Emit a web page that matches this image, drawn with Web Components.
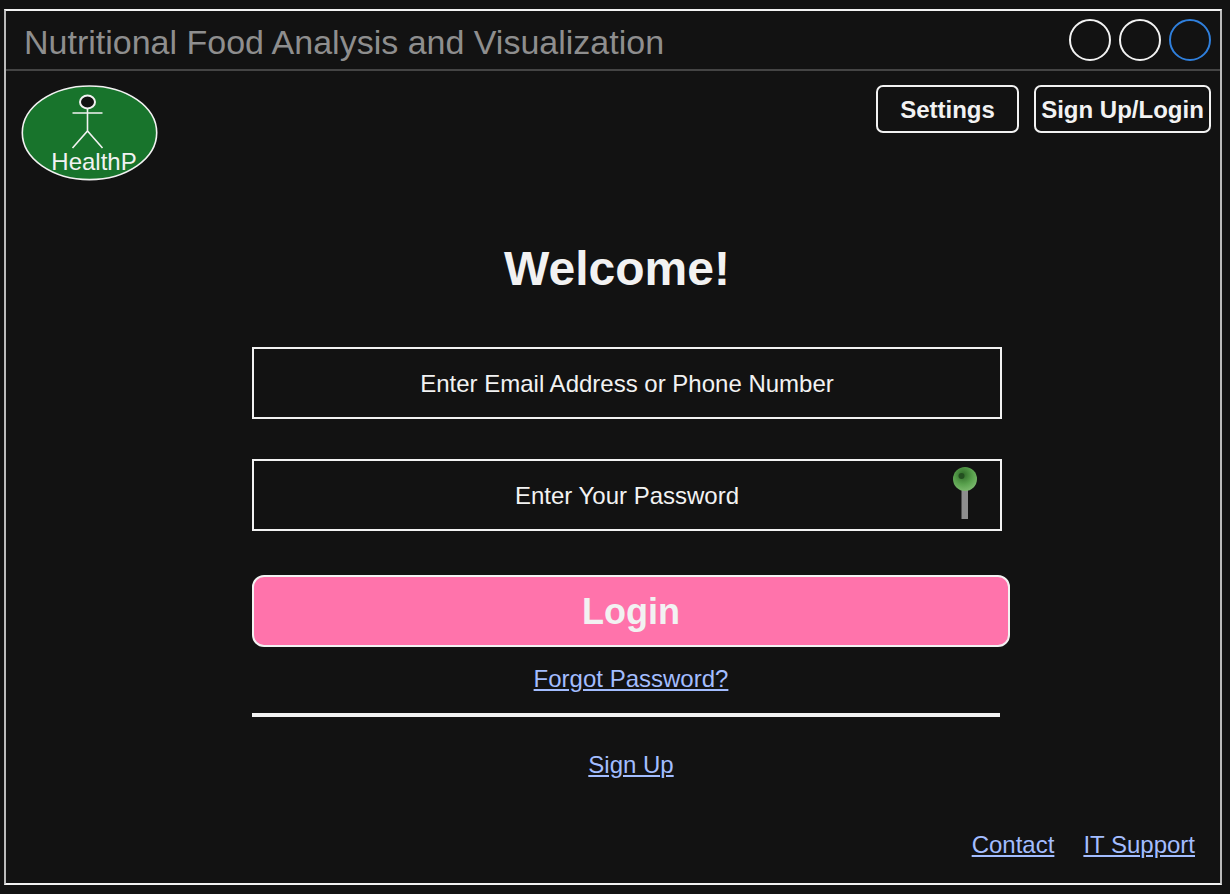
<!DOCTYPE html>
<html>
<head>
<meta charset="utf-8">
<title>Nutritional Food Analysis and Visualization</title>
<style>
    html, body {
        margin: 0;
        background: #121212;
        font-family: "Liberation Sans", Arial, sans-serif;
        color: #f2f2f2;
    }

    body {
        padding: 9px 0 0 4px;
    }
</style>
</head>
<body>
<app-window heading="Nutritional Food Analysis and Visualization">
    <top-bar>
        <health-logo></health-logo>
        <nav-button style="width: 143px">Settings</nav-button>
        <nav-button style="width: 177px">Sign Up/Login</nav-button>
    </top-bar>
    <login-form></login-form>
    <foot-links></foot-links>
</app-window>

<script>
class AppWindow extends HTMLElement {
    constructor() {
        super();
        this.attachShadow({ mode: "open" });
        this.shadowRoot.innerHTML = `
            <style>
            :host {
                display: flex;
                flex-direction: column;
                box-sizing: border-box;
                width: 1218px;
                height: 876px;
                border: 2px solid #f2f2f2;
                border-left-color: #bbb;
                border-right-color: #bbb;
            }

            .title {
                display: flex;
                align-items: center;
                justify-content: space-between;
                box-sizing: border-box;
                height: 60px;
                padding: 0 9px 0 18px;
                border-bottom: 2px solid #444;
            }

            h1 {
                margin: 0;
                padding-top: 4px;
                font-size: 34px;
                font-weight: 400;
                color: #8e8e8e;
            }

            .controls {
                display: flex;
                gap: 8px;
            }

            .controls span {
                box-sizing: border-box;
                width: 42px;
                height: 42px;
                border: 2px solid #f2f2f2;
                border-radius: 50%;
            }

            .controls span:last-child {
                border-color: #2f7fdc;
            }
            </style>
            <div class="title">
                <h1>${this.getAttribute("heading")}</h1>
                <div class="controls"><span></span><span></span><span></span></div>
            </div>
            <slot></slot>
        `;
    }
}

class TopBar extends HTMLElement {
    constructor() {
        super();
        this.attachShadow({ mode: "open" });
        this.shadowRoot.innerHTML = `
            <style>
            :host {
                display: flex;
                align-items: flex-start;
                gap: 15px;
                padding: 14px 9px 0 15px;
            }

            ::slotted(health-logo) {
                margin-right: auto;
            }
            </style>
            <slot></slot>
        `;
    }
}

class HealthLogo extends HTMLElement {
    constructor() {
        super();
        this.attachShadow({ mode: "open" });
        this.shadowRoot.innerHTML = `
            <style>
            :host {
                display: block;
                position: relative;
                width: 137px;
                height: 97px;
            }

            svg {
                display: block;
            }

            span {
                position: absolute;
                left: 9px;
                right: 0;
                top: 63px;
                text-align: center;
                font-size: 24px;
                line-height: 28px;
                color: #f2f2f2;
            }
            </style>
            <svg width="137" height="97" viewBox="0 0 137 97">
                <ellipse cx="68.5" cy="47.8" rx="67.2" ry="46.8" fill="#18742c" stroke="#f2f2f2" stroke-width="1.6"/>
                <ellipse cx="66.5" cy="17" rx="7.5" ry="6.5" fill="#121212" stroke="#f2f2f2" stroke-width="2"/>
                <path d="M66.5 24V46M51.5 28H81.5M51.5 63L66.5 46L81.5 63" fill="none" stroke="#f2f2f2" stroke-width="1.6"/>
            </svg>
            <span>HealthP</span>
        `;
    }
}

class NavButton extends HTMLElement {
    constructor() {
        super();
        this.attachShadow({ mode: "open" });
        this.shadowRoot.innerHTML = `
            <style>
            :host {
                display: flex;
                align-items: center;
                justify-content: center;
                box-sizing: border-box;
                height: 48px;
                padding-top: 2px;
                border: 2px solid #f2f2f2;
                border-radius: 7px;
                font-size: 24px;
                font-weight: 700;
                color: #f2f2f2;
                white-space: nowrap;
            }
            </style>
            <slot></slot>
        `;
    }
}

class TextField extends HTMLElement {
    constructor() {
        super();
        this.attachShadow({ mode: "open" });
        this.shadowRoot.innerHTML = `
            <style>
            :host {
                display: flex;
                align-items: center;
                justify-content: center;
                position: relative;
                box-sizing: border-box;
                width: 750px;
                height: 72px;
                padding-top: 1px;
                border: 2px solid #f2f2f2;
                font-size: 24px;
                color: #f2f2f2;
            }

            ::slotted(svg) {
                position: absolute;
                right: 22px;
                top: 5px;
            }
            </style>
            <span>${this.getAttribute("placeholder")}</span>
            <slot></slot>
        `;
    }
}

class LoginForm extends HTMLElement {
    constructor() {
        super();
        this.attachShadow({ mode: "open" });
        this.shadowRoot.innerHTML = `
            <style>
            :host {
                display: flex;
                flex-direction: column;
                align-items: flex-start;
                padding-left: 246px;
            }

            h2 {
                width: 730px;
                margin: 59px 0 0;
                text-align: center;
                font-size: 48px;
                line-height: 56px;
                font-weight: 700;
                color: #f2f2f2;
            }

            text-field + text-field {
                margin-top: 40px;
            }

            text-field:first-of-type {
                margin-top: 50px;
            }

            .login {
                display: flex;
                align-items: center;
                justify-content: center;
                box-sizing: border-box;
                width: 758px;
                height: 72px;
                margin-top: 44px;
                padding-top: 2px;
                background: #ff73ab;
                border: 2px solid #f2f2f2;
                border-radius: 12px;
                font-size: 36px;
                font-weight: 700;
                color: #f2f2f2;
            }

            a {
                color: #a3bdff;
                font-size: 24px;
                line-height: 28px;
            }

            .center {
                display: flex;
                justify-content: center;
                width: 758px;
            }

            .forgot {
                margin-top: 18px;
            }

            hr {
                width: 748px;
                height: 4px;
                margin: 20px 0 0;
                border: none;
                background: #f2f2f2;
            }

            .signup {
                margin-top: 34px;
            }
            </style>
            <h2>Welcome!</h2>
            <text-field placeholder="Enter Email Address or Phone Number"></text-field>
            <text-field placeholder="Enter Your Password">
                <svg width="26" height="54" viewBox="0 0 26 54">
                    <defs>
                        <radialGradient id="knob" cx="42%" cy="32%" r="68%">
                            <stop offset="0" stop-color="#2f6a28"/>
                            <stop offset="0.6" stop-color="#5aa24e"/>
                            <stop offset="1" stop-color="#7ab86c"/>
                        </radialGradient>
                    </defs>
                    <rect x="9.5" y="22" width="6.5" height="31" fill="#8e8e8e"/>
                    <circle cx="13" cy="13" r="12" fill="url(#knob)"/>
                    <circle cx="9.5" cy="10" r="3" fill="#234f20"/>
                </svg>
            </text-field>
            <div class="login">Login</div>
            <div class="center forgot"><a href="#">Forgot Password?</a></div>
            <hr>
            <div class="center signup"><a href="#">Sign Up</a></div>
        `;
    }
}

class FootLinks extends HTMLElement {
    constructor() {
        super();
        this.attachShadow({ mode: "open" });
        this.shadowRoot.innerHTML = `
            <style>
            :host {
                display: flex;
                justify-content: flex-end;
                gap: 29px;
                margin-top: auto;
                padding: 0 25px 24px 0;
            }

            a {
                color: #a3bdff;
                font-size: 24px;
                line-height: 28px;
            }
            </style>
            <a href="#">Contact</a>
            <a href="#">IT Support</a>
        `;
    }
}

customElements.define("text-field", TextField);
customElements.define("app-window", AppWindow);
customElements.define("top-bar", TopBar);
customElements.define("health-logo", HealthLogo);
customElements.define("nav-button", NavButton);
customElements.define("login-form", LoginForm);
customElements.define("foot-links", FootLinks);
</script>
</body>
</html>
